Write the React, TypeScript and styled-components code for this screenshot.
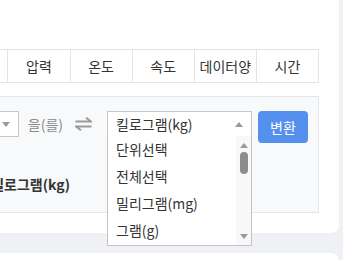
import React from "react";
import styled, { createGlobalStyle } from "styled-components";

const GlobalStyle = createGlobalStyle`
    html, body {
        margin: 0;
        padding: 0;
        background: #eff1f5;
        overflow: hidden;
    }
    body {
        font-family: "Noto Sans CJK KR", "Noto Sans", sans-serif;
        color: #333;
    }
`;

const Page = styled.div`
    display: flex;
    flex-direction: column;
    align-items: flex-end;
    gap: 20px;
    width: 343px;
    height: 260px;
    padding-right: 4px;
    box-sizing: border-box;
    overflow: hidden;
`;

const Card = styled.div<{ $top?: boolean }>`
    width: 600px;
    flex-shrink: 0;
    background: #fff;
    box-sizing: border-box;
    padding: ${(p) => (p.$top ? "49px 20px 20px" : "0 20px")};
    border-radius: ${(p) => (p.$top ? "0 0 8px 0" : "0 8px 0 0")};
    height: ${(p) => (p.$top ? "auto" : "40px")};
`;

const UnitTable = styled.table`
    width: 560px;
    table-layout: fixed;
    border-collapse: collapse;
`;

const HeadCell = styled.td`
    height: 32px;
    padding: 0;
    border: 1px solid #e4e4e4;
    text-align: center;
    font-size: 14px;
    color: #333;
`;

const Panel = styled.div`
    margin-top: 13px;
    background: #f8f9fa;
    border: 1px solid #e5e6e8;
    padding: 14px 10px 18px 12px;
`;

const ConvertRow = styled.div`
    display: flex;
    align-items: flex-start;
`;

const NumberInput = styled.div`
    flex: 1;
    height: 26px;
    background: #fff;
    border: 1px solid #ccc;
    box-sizing: border-box;
    margin-right: 8px;
`;

const SelectBox = styled.div<{ $width: number }>`
    position: relative;
    width: ${(p) => p.$width}px;
    height: 26px;
    box-sizing: border-box;
    background: #fff;
    border: 1px solid #c8c8c8;
    display: flex;
    align-items: center;
    padding: 0 8px;
    font-size: 14px;
    color: #333;
`;

const SelectText = styled.span`
    flex: 1;
    white-space: nowrap;
`;

const Caret = styled.span<{ $up?: boolean }>`
    width: 0;
    height: 0;
    border-left: 4px solid transparent;
    border-right: 4px solid transparent;
    ${(p) => (p.$up ? "border-bottom: 5px solid #9a9a9a;" : "border-top: 5px solid #9a9a9a;")}
`;

const JoinLabel = styled.span`
    line-height: 26px;
    font-size: 14px;
    color: #8a8a8a;
    margin: 0 12px 0 9px;
    white-space: nowrap;
`;

const SwapIcon = styled.svg`
    margin: 6px 15px 0 0;
    flex-shrink: 0;
`;

const ConvertButton = styled.button`
    margin-left: 6px;
    width: 50px;
    height: 32px;
    border: none;
    border-radius: 4px;
    background: #5690ef;
    color: #fff;
    font-family: inherit;
    font-size: 14px;
    padding: 0;
`;

const Dropdown = styled.div`
    position: absolute;
    top: 100%;
    left: -1px;
    width: 145px;
    height: 110px;
    box-sizing: border-box;
    background: #fff;
    border: 1px solid #c4c4c4;
    border-top: none;
    display: flex;
    z-index: 2;
`;

const OptionList = styled.div`
    flex: 1;
    display: flex;
    flex-direction: column;
`;

const Option = styled.div`
    height: 27px;
    line-height: 27px;
    padding-left: 8px;
    font-size: 14px;
    color: #333;
    white-space: nowrap;
`;

const ScrollTrack = styled.div`
    width: 15px;
    background: #f8f8f8;
    display: flex;
    flex-direction: column;
    align-items: center;
    padding: 7px 0 6px;
`;

const ScrollThumb = styled.div`
    width: 8px;
    height: 22px;
    border-radius: 4px;
    background: #8c8c8c;
    margin-top: 4px;
`;

const ScrollSpacer = styled.div`
    flex: 1;
`;

const ResultLine = styled.div`
    margin-top: 31px;
    width: 298px;
    text-align: right;
    font-size: 14px;
    line-height: 20px;
    font-weight: 700;
    color: #333;
    white-space: nowrap;
`;

// only the right-hand columns are on screen
const units = ["", "", "", "", "압력", "온도", "속도", "데이터양", "시간"];
const options = ["단위선택", "전체선택", "밀리그램(mg)", "그램(g)"];

const App: React.FC = () => {
    return (
        <>
            <GlobalStyle />
            <Page>
                <Card $top>
                    <UnitTable>
                        <tbody>
                            <tr>
                                {units.map((u, i) => (
                                    <HeadCell key={i}>{u}</HeadCell>
                                ))}
                            </tr>
                        </tbody>
                    </UnitTable>
                    <Panel>
                        <ConvertRow>
                            <NumberInput />
                            <SelectBox $width={140}>
                                <SelectText />
                                <Caret />
                            </SelectBox>
                            <JoinLabel>을(를)</JoinLabel>
                            <SwapIcon width="17" height="14" viewBox="0 0 17 14">
                                <path
                                    d="M0.5 4.5H16L11 0.8M16.5 9.5H1L6 13.2"
                                    fill="none"
                                    stroke="#9a9a9a"
                                    strokeWidth="2"
                                />
                            </SwapIcon>
                            <SelectBox $width={145}>
                                <SelectText>킬로그램(kg)</SelectText>
                                <Caret $up />
                                <Dropdown>
                                    <OptionList>
                                        {options.map((o) => (
                                            <Option key={o}>{o}</Option>
                                        ))}
                                    </OptionList>
                                    <ScrollTrack>
                                        <Caret $up />
                                        <ScrollThumb />
                                        <ScrollSpacer />
                                        <Caret />
                                    </ScrollTrack>
                                </Dropdown>
                            </SelectBox>
                            <ConvertButton>변환</ConvertButton>
                        </ConvertRow>
                        <ResultLine>1 킬로그램(kg)</ResultLine>
                    </Panel>
                </Card>
                <Card />
            </Page>
        </>
    );
};

export default App;
